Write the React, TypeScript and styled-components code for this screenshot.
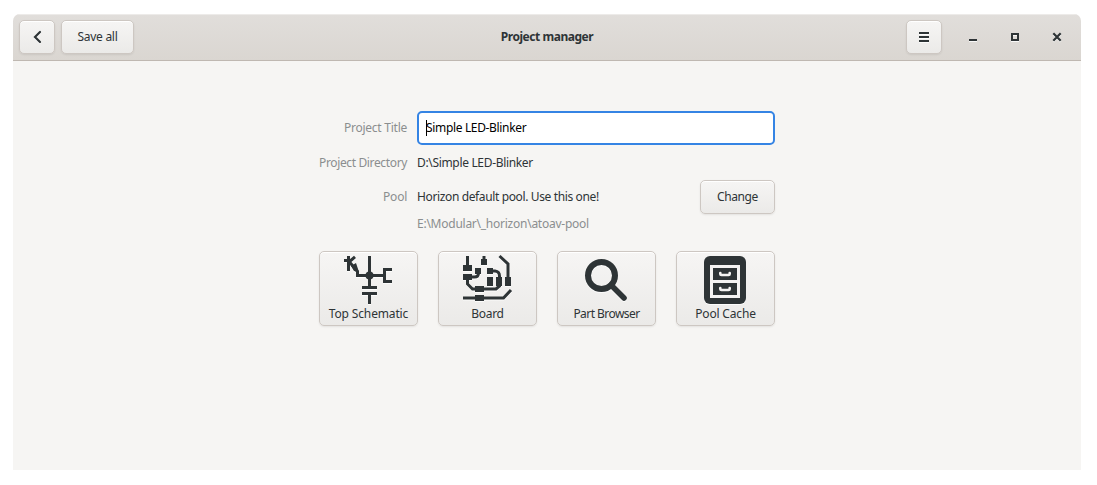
import React from 'react';
import styled, { createGlobalStyle } from 'styled-components';

const ink = '#2e3436';
const muted = '#8b8e8f';

const GlobalStyle = createGlobalStyle`
  *, *::before, *::after { box-sizing: border-box; }
  body {
    margin: 0;
    background: #fff;
    color: ${ink};
    font: 12px/18px "Noto Sans", "Open Sans", sans-serif;
  }
  button { font: inherit; color: inherit; }
`;

const Page = styled.div`
  height: 485px;
  padding: 14px 16px 15px 13px;
  overflow: hidden;
`;

const Window = styled.div`
  height: 456px;
  display: flex;
  flex-direction: column;
  background: #f6f5f3;
  border-radius: 7px 7px 0 0;
  overflow: hidden;
`;

const HeaderBar = styled.header`
  flex: none;
  height: 47px;
  padding: 0 3px 0 6px;
  display: grid;
  grid-template-columns: 1fr auto 1fr;
  align-items: center;
  background: linear-gradient(#e1dedb, #dad6d1);
  border-bottom: 1px solid #bfb8b1;
  box-shadow: inset 0 1px #edebe9;
`;

const HeaderGroup = styled.div<{ $end?: boolean }>`
  display: flex;
  align-items: center;
  gap: ${(p) => (p.$end ? 0 : 6)}px;
  justify-content: ${(p) => (p.$end ? 'flex-end' : 'flex-start')};
`;

const Title = styled.h1`
  margin: 0;
  padding-right: 3px;
  font-size: 12px;
  font-weight: 700;
  letter-spacing: -0.46px;
`;

const Label = styled.span<{ $spacing?: number }>`
  white-space: nowrap;
  letter-spacing: ${(p) => p.$spacing ?? 0}px;
`;

const Button = styled.button<{ $width: number }>`
  width: ${(p) => p.$width}px;
  height: 34px;
  padding: 0;
  display: flex;
  align-items: center;
  justify-content: center;
  border: 1px solid #cdc7c2;
  border-radius: 5px;
  background: linear-gradient(#f6f5f4, #ebeae8);
  box-shadow: inset 0 1px #fff, 0 1px 2px rgba(0, 0, 0, 0.08);
`;

const WindowControl = styled.button`
  width: 42px;
  height: 34px;
  padding: 0;
  display: flex;
  align-items: center;
  justify-content: center;
  border: 0;
  background: none;
`;

const WindowControls = styled.div`
  display: flex;
  margin-left: 10px;
`;

const Glyph = styled.svg`
  display: block;
  flex: none;
  overflow: visible;
  filter: drop-shadow(0 1px 0 rgba(255, 255, 255, 0.8));
`;

const Content = styled.main`
  width: 456px;
  margin: 50px 0 0 306px;
`;

const Row = styled.div<{ $height: number; $gap?: number }>`
  height: ${(p) => p.$height}px;
  margin-top: ${(p) => p.$gap ?? 0}px;
  display: grid;
  grid-template-columns: 88px 1fr auto;
  column-gap: 10px;
  align-items: center;
`;

const FieldName = styled.div<{ $spacing: number }>`
  color: ${muted};
  text-align: right;
  white-space: nowrap;
  letter-spacing: ${(p) => p.$spacing}px;
`;

const PathText = styled.div`
  color: ${muted};
  grid-column: 2;
  letter-spacing: -0.25px;
`;

const Entry = styled.div`
  grid-column: 2 / 4;
  height: 34px;
  padding: 0 7px;
  display: flex;
  align-items: center;
  color: #000;
  background: #fff;
  border: 2px solid #3584e4;
  border-radius: 5px;
`;

const Caret = styled.i`
  width: 1px;
  height: 16px;
  margin-right: -1px;
  background: #000;
`;

const Tiles = styled.div`
  display: flex;
  gap: 20px;
  margin-top: 18px;
`;

const Tile = styled(Button)`
  height: 75px;
  padding: 4px 0 0;
  flex-direction: column;
  justify-content: flex-start;
  gap: 1px;
`;

const TileGlyph = styled(Glyph)`
  margin-right: 1px;
`;

const TileIcon = ({ children }: { children: React.ReactNode }) => (
  <TileGlyph width="48" height="48" viewBox="0 0 48 48" fill={ink}>
    {children}
  </TileGlyph>
);

const SchematicIcon = () => (
  <TileIcon>
    <path d="M24 0h3v30h6v3H18v-3h6zM18 36h15v3h-6v9h-3v-9h-6zM3 0h3v15H3zM0 3h3v3H0zM12 18h27v3H12zM39 12h9v3h-6v9h6v3h-9z" />
    <circle cx="25.5" cy="19.5" r="4" />
    <path d="M5 6 11 .8M5.500 6l8 9.500v5" fill="none" stroke={ink} strokeWidth="3" />
    <path d="M7 10l5-3 3 9-5-1z" />
  </TileIcon>
);

const BoardIcon = () => (
  <TileIcon>
    <path d="M3 0h3v9H3zM0 9h9v6H0zM0 18h9v6H0zM12 12h6v6h-6zM19.5 0h3v3H24v6h-6V3h1.500zM24 12h6v6h-6zM24 21h6v9h-6zM33 21h6v9h-6zM42 21h6v9h-6zM12 30h9v6h-9zM12 39h9v6h-9z" />
    <path
      d="M9 21h2.5q4 0 4-4M30 15h2q4.5.5 4.5 5v2M4.5 24v4l5 5H33l3.5-3v-2M36.5 0l8.500 8v14M0 42h40.500l7.500-8"
      fill="none"
      stroke={ink}
      strokeWidth="3"
    />
  </TileIcon>
);

const SearchIcon = () => (
  <TileIcon>
    <circle cx="19.5" cy="19.5" r="13.5" fill="none" stroke={ink} strokeWidth="6" />
    <path d="M29 29l13 13" stroke={ink} strokeWidth="5.6" strokeLinecap="round" />
  </TileIcon>
);

const CabinetIcon = () => (
  <TileIcon>
    <rect x="3" width="42" height="48" rx="6" />
    <path d="M9 9h30v33H9z" fill="#f4f3f2" />
    <path d="M12 12h24v12H12zM12 27h24v12H12z" />
    <path
      d="M19.3 17v1q0 1 1.200 1h7q1.200 0 1.200-1v-1M19.300 32v1q0 1 1.200 1h7q1.200 0 1.200-1v-1"
      fill="none"
      stroke="#f4f3f2"
      strokeWidth="2.6"
      strokeLinecap="round"
    />
  </TileIcon>
);

const tiles = [
  { name: 'Top Schematic', Icon: SchematicIcon, spacing: -0.15 },
  { name: 'Board', Icon: BoardIcon, spacing: -0.3 },
  { name: 'Part Browser', Icon: SearchIcon, spacing: -0.55 },
  { name: 'Pool Cache', Icon: CabinetIcon, spacing: -0.18 },
];

export default function App() {
  return (
    <>
      <GlobalStyle />
      <Page>
        <Window>
          <HeaderBar>
            <HeaderGroup>
              <Button $width={36} aria-label="Back">
                <Glyph width="16" height="16" viewBox="0 0 16 16">
                  <path d="M11 3L6 8l5 5" fill="none" stroke={ink} strokeWidth="2.2" strokeLinecap="round" />
                </Glyph>
              </Button>
              <Button $width={73}>
                <Label $spacing={-0.28}>Save all</Label>
              </Button>
            </HeaderGroup>
            <Title>Project manager</Title>
            <HeaderGroup $end>
              <Button $width={36} aria-label="Menu">
                <Glyph width="16" height="16" viewBox="0 0 16 16" fill={ink}>
                  <path d="M3 3h10v2H3zM3 7h10v2H3zM3 11h10v2H3z" />
                </Glyph>
              </Button>
              <WindowControls>
                <WindowControl aria-label="Minimize">
                  <Glyph width="16" height="16" viewBox="0 0 16 16" fill={ink}>
                    <path d="M4 10h8v2H4z" />
                  </Glyph>
                </WindowControl>
                <WindowControl aria-label="Maximize">
                  <Glyph width="16" height="16" viewBox="0 0 16 16">
                    <path d="M5 5h6v6H5z" fill="none" stroke={ink} strokeWidth="2" />
                  </Glyph>
                </WindowControl>
                <WindowControl aria-label="Close">
                  <Glyph width="16" height="16" viewBox="0 0 16 16">
                    <path d="M4.3 4.3l7.400 7.400M11.700 4.300l-7.400 7.400" stroke={ink} strokeWidth="2.2" />
                  </Glyph>
                </WindowControl>
              </WindowControls>
            </HeaderGroup>
          </HeaderBar>
          <Content>
            <Row $height={34}>
              <FieldName $spacing={-0.25}>Project Title</FieldName>
              <Entry>
                <Caret />
                <Label $spacing={-0.34}>Simple LED-Blinker</Label>
              </Entry>
            </Row>
            <Row $height={18} $gap={9}>
              <FieldName $spacing={-0.36}>Project Directory</FieldName>
              <Label $spacing={-0.33}>D:\Simple LED-Blinker</Label>
            </Row>
            <Row $height={34} $gap={8}>
              <FieldName $spacing={-0.25}>Pool</FieldName>
              <Label $spacing={-0.37}>Horizon default pool. Use this one!</Label>
              <Button $width={75}>
                <Label $spacing={-0.4}>Change</Label>
              </Button>
            </Row>
            <Row $height={18} $gap={1}>
              <PathText>E:\Modular\_horizon\atoav-pool</PathText>
            </Row>
            <Tiles>
              {tiles.map(({ name, Icon, spacing }) => (
                <Tile key={name} $width={99}>
                  <Icon />
                  <Label $spacing={spacing}>{name}</Label>
                </Tile>
              ))}
            </Tiles>
          </Content>
        </Window>
      </Page>
    </>
  );
}
